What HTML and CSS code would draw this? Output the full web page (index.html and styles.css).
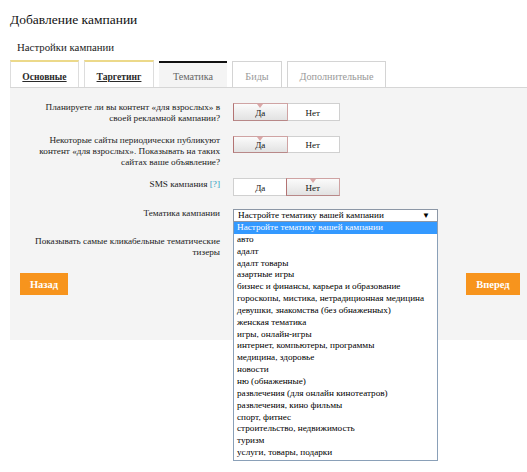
FILE: index.html
```html
<!DOCTYPE html>
<html>
<head>
<meta charset="utf-8">
<link rel="stylesheet" href="styles.css">
</head>
<body>
<div class="page">
<h1 class="title">Добавление кампании</h1>
<div class="subtitle">Настройки кампании</div>
<div class="tabs">
  <div class="tab tab-done w1">Основные</div>
  <div class="tab tab-done w2">Таргетинг</div>
  <div class="tab tab-active w3">Тематика</div>
  <div class="tab tab-off w4">Биды</div>
  <div class="tab tab-off w5">Дополнительные</div>
</div>
<div class="panel">
  <div class="row r1">
    <div class="label">Планируете ли вы контент «для взрослых» в своей рекламной кампании?</div>
    <div class="toggle"><span class="opt on">Да</span><span class="opt">Нет</span></div>
  </div>
  <div class="row r2">
    <div class="label">Некоторые сайты периодически публикуют контент «для взрослых». Показывать на таких сайтах ваше объявление?</div>
    <div class="toggle"><span class="opt on">Да</span><span class="opt">Нет</span></div>
  </div>
  <div class="row r3">
    <div class="label">SMS кампания <span class="help">[?]</span></div>
    <div class="toggle"><span class="opt">Да</span><span class="opt on">Нет</span></div>
  </div>
  <div class="row r4">
    <div class="label">Тематика кампании</div>
    <div class="select-wrap">
      <div class="select">Настройте тематику вашей кампании<span class="arrow">▼</span></div>
      <ul class="options">
        <li class="sel">Настройте тематику вашей кампании</li>
        <li>авто</li>
        <li>адалт</li>
        <li>адалт товары</li>
        <li>азартные игры</li>
        <li>бизнес и финансы, карьера и образование</li>
        <li>гороскопы, мистика, нетрадиционная медицина</li>
        <li>девушки, знакомства (без обнаженных)</li>
        <li>женская тематика</li>
        <li>игры, онлайн-игры</li>
        <li>интернет, компьютеры, программы</li>
        <li>медицина, здоровье</li>
        <li>новости</li>
        <li>ню (обнаженные)</li>
        <li>развлечения (для онлайн кинотеатров)</li>
        <li>развлечения, кино фильмы</li>
        <li>спорт, фитнес</li>
        <li>строительство, недвижимость</li>
        <li>туризм</li>
        <li>услуги, товары, подарки</li>
      </ul>
    </div>
  </div>
  <div class="row r5">
    <div class="label">Показывать самые кликабельные тематические тизеры</div>
  </div>
  <div class="buttons">
    <span class="btn back">Назад</span>
    <span class="btn next">Вперед</span>
  </div>
</div>
</div>
</body>
</html>
```
FILE: styles.css
```css
html, body {
  background: #fff;
}
body {
  margin: 0;
  font-family: "Liberation Serif", "Times New Roman", serif;
  font-size: 9.2px;
  color: #1a1a1a;
}
.page {
  min-height: 472px;
}
.title {
  margin: 0;
  padding: 12px 0 0 10px;
  font-size: 13.5px;
  font-weight: normal;
  line-height: 16px;
  color: #111;
}
.subtitle {
  padding: 12px 0 0 17px;
  font-size: 10.8px;
  line-height: 14px;
  color: #222;
}
.tabs {
  display: flex;
  gap: 5px;
  margin: 6px 0 0 10px;
  height: 27px;
}
.tab {
  box-sizing: border-box;
  height: 27px;
  display: flex;
  align-items: center;
  justify-content: center;
  border: 1px solid #d4d4d4;
  border-bottom: none;
  background: #fff;
  padding-top: 3px;
  font-size: 10.2px;
}
.w1 { width: 69px; }
.w2 { width: 70px; }
.w3 { width: 68px; }
.w4 { width: 50px; }
.w5 { width: 99px; }
.tab-done {
  border-top: 2px solid #ecd98a;
  border-left-color: #ddd;
  border-right-color: #ddd;
  font-weight: bold;
  font-size: 9.6px;
  text-decoration: underline;
  color: #2a2a2a;
}
.tab-active {
  border: none;
  border-top: 2px solid #111;
  margin-top: 1px;
  height: 26px;
  background: #f4f4f4;
  color: #666;
}
.tab-off {
  color: #999;
  margin-top: 1px;
  height: 26px;
}
.panel {
  margin-left: 10px;
  background: #f4f4f4;
  border-top: 1px solid #d6d6d6;
  height: 253px;
  padding: 14px 0 0 10px;
  box-sizing: border-box;
}
.row {
  display: flex;
  align-items: flex-start;
}
.label {
  box-sizing: border-box;
  width: 200px;
  padding-left: 8px;
  text-align: right;
  line-height: 11px;
  color: #222;
  margin-right: 13px;
}
.r1 .toggle { margin-top: 1px; }
.r2 { margin-top: 11px; }
.r2 .toggle { margin-top: 1px; height: 17px; }
.r3 { margin-top: 10px; }
.r3 .label { padding-top: 1px; }
.r4 { margin-top: 13px; }
.r4 .label { margin-top: -1px; }
.r5 { margin-top: 14px; }
.help { color: #2c9cc0; }
.toggle {
  display: flex;
  width: 107px;
  height: 18px;
  box-sizing: border-box;
  border: 1px solid #d0d0d0;
  background: #fff;
}
.opt {
  position: relative;
  flex: 1;
  display: flex;
  align-items: center;
  justify-content: center;
  font-size: 9px;
  color: #111;
  padding-top: 1px;
}
.opt.on {
  margin: -1px;
  border: 1px solid #cfa3a3;
  border-left-color: #b37373;
  border-bottom-color: #b88888;
  background: linear-gradient(#fbfbfb, #e2e2e2);
}
.opt.on::before {
  content: "";
  position: absolute;
  top: 0;
  left: 50%;
  margin-left: -3px;
  border-left: 3px solid transparent;
  border-right: 3px solid transparent;
  border-top: 4px solid #dba7a7;
}
.select-wrap {
  position: relative;
  width: 205px;
}
.select {
  box-sizing: border-box;
  height: 13px;
  border: 1px solid #8c97a6;
  background: #fff;
  line-height: 11px;
  padding-left: 4px;
  position: relative;
  color: #000;
}
.arrow {
  position: absolute;
  right: 7px;
  top: 0;
  font-size: 8px;
  color: #000;
}
.options {
  position: absolute;
  left: 0;
  top: 13px;
  width: 205px;
  box-sizing: border-box;
  margin: 0;
  padding: 0 0 1px 0;
  list-style: none;
  border: 1px solid #8aa0b8;
  border-top: none;
  background: #fff;
  z-index: 5;
}
.options li {
  line-height: 11.85px;
  padding-left: 3px;
  white-space: nowrap;
  color: #000;
}
.options li.sel {
  background: #3399ff;
  color: #fff;
}
.buttons {
  display: flex;
  justify-content: space-between;
  margin-top: 15px;
  padding-right: 7px;
}
.btn {
  display: flex;
  align-items: center;
  justify-content: center;
  height: 22px;
  background: #f7941d;
  color: #fff;
  font-weight: bold;
  font-size: 10.5px;
}
.back { width: 48px; }
.next { width: 54px; }
```
